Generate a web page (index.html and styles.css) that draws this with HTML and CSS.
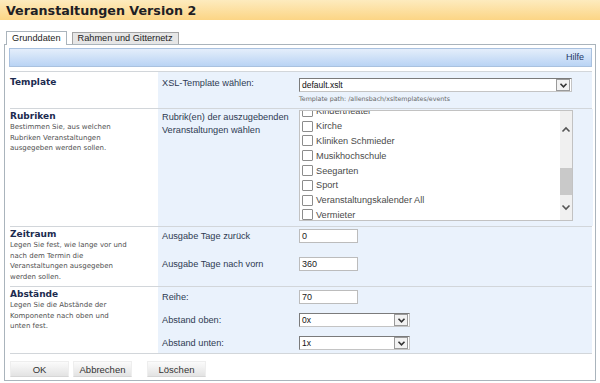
FILE: index.html
```html
<!DOCTYPE html>
<html lang="de">
<head>
    <meta charset="UTF-8">
    <title>Veranstaltungen Version 2</title>
    <link rel="stylesheet" href="styles.css">
</head>
<body>
    <div class="page-title">Veranstaltungen Version 2</div>

    <div class="tabs">
        <div class="tab tab-active">Grunddaten</div>
        <div class="tab">Rahmen und Gitternetz</div>
    </div>

    <div class="panel">
        <div class="help-bar">Hilfe</div>

        <div class="row row-first">
            <div class="row-info info-template">
                <div class="row-title">Template</div>
            </div>
            <div class="row-fields fields-template">
                <div class="field">
                    <div class="field-label label-template">XSL-Template wählen:</div>
                    <div class="field-control">
                        <div class="select select-wide">
                            <span class="select-value">default.xslt</span>
                            <span class="select-arrow"><svg width="9" height="7" viewBox="0 0 9 7"><path d="M1.5 1.8 L4.5 4.8 L7.5 1.8" fill="none" stroke="#333" stroke-width="1.6"/></svg></span>
                        </div>
                        <div class="path-hint">Template path: /allensbach/xsltemplates/events</div>
                    </div>
                </div>
            </div>
        </div>

        <div class="row">
            <div class="row-info">
                <div class="row-title">Rubriken</div>
                <div class="row-desc">Bestimmen Sie, aus welchen Rubriken Veranstaltungen ausgegeben werden sollen.</div>
            </div>
            <div class="row-fields fields-rubriken">
                <div class="field">
                    <div class="field-label label-multi">Rubrik(en) der auszugebenden Veranstaltungen wählen</div>
                    <div class="listbox">
                        <div class="list-view">
                            <ul class="check-list">
                                <li><span class="check"></span>Kindertheater</li>
                                <li><span class="check"></span>Kirche</li>
                                <li><span class="check"></span>Kliniken Schmieder</li>
                                <li><span class="check"></span>Musikhochschule</li>
                                <li><span class="check"></span>Seegarten</li>
                                <li><span class="check"></span>Sport</li>
                                <li><span class="check"></span>Veranstaltungskalender All</li>
                                <li><span class="check"></span>Vermieter</li>
                            </ul>
                        </div>
                        <div class="scrollbar">
                            <span class="scroll-arrow"><svg width="10" height="7" viewBox="0 0 10 7"><path d="M1.5 5.5 L5 2 L8.5 5.5" fill="none" stroke="#555" stroke-width="1.6"/></svg></span>
                            <span class="scroll-track"><span class="scroll-thumb"></span></span>
                            <span class="scroll-arrow"><svg width="10" height="7" viewBox="0 0 10 7"><path d="M1.5 1.5 L5 5 L8.5 1.5" fill="none" stroke="#555" stroke-width="1.6"/></svg></span>
                        </div>
                    </div>
                </div>
            </div>
        </div>

        <div class="row">
            <div class="row-info">
                <div class="row-title">Zeitraum</div>
                <div class="row-desc">Legen Sie fest, wie lange vor und nach dem Termin die Veranstaltungen ausgegeben werden sollen.</div>
            </div>
            <div class="row-fields fields-zeitraum">
                <div class="field">
                    <div class="field-label">Ausgabe Tage zurück</div>
                    <div class="input">0</div>
                </div>
                <div class="field">
                    <div class="field-label">Ausgabe Tage nach vorn</div>
                    <div class="input">360</div>
                </div>
            </div>
        </div>

        <div class="row">
            <div class="row-info">
                <div class="row-title">Abstände</div>
                <div class="row-desc">Legen Sie die Abstände der Komponente nach oben und unten fest.</div>
            </div>
            <div class="row-fields fields-abstaende">
                <div class="field">
                    <div class="field-label">Reihe:</div>
                    <div class="input">70</div>
                </div>
                <div class="field">
                    <div class="field-label">Abstand oben:</div>
                    <div class="select select-small">
                        <span class="select-value">0x</span>
                        <span class="select-arrow"><svg width="9" height="7" viewBox="0 0 9 7"><path d="M1.5 1.8 L4.5 4.8 L7.5 1.8" fill="none" stroke="#333" stroke-width="1.6"/></svg></span>
                    </div>
                </div>
                <div class="field">
                    <div class="field-label">Abstand unten:</div>
                    <div class="select select-small">
                        <span class="select-value">1x</span>
                        <span class="select-arrow"><svg width="9" height="7" viewBox="0 0 9 7"><path d="M1.5 1.8 L4.5 4.8 L7.5 1.8" fill="none" stroke="#333" stroke-width="1.6"/></svg></span>
                    </div>
                </div>
            </div>
        </div>

        <div class="buttons">
            <button class="btn">OK</button>
            <button class="btn">Abbrechen</button>
            <button class="btn btn-gap">Löschen</button>
        </div>
    </div>
</body>
</html>
```

FILE: styles.css
```css
:root {
    --title: #1c2b4f;
    --label: #2e3a52;
    --desc: #505050;
    --line: #d2d6da;
    --field-bg: #eaf2fc;
    --panel-border: #aab4bc;
}

* {
    margin: 0;
    padding: 0;
    box-sizing: border-box;
}

body {
    font-family: 'Liberation Sans', Arial, sans-serif;
    font-size: 9px;
    color: var(--label);
    background: #fff;
    width: 600px;
}

.page-title {
    height: 20px;
    padding: 3px 6px 0;
    font-family: 'DejaVu Sans', Verdana, sans-serif;
    font-size: 12.7px;
    font-weight: bold;
    color: #1e2024;
    background: linear-gradient(#fdebbe, #fcd585);
}

/* tabs */

.tabs {
    display: flex;
    align-items: flex-end;
    gap: 5px;
    margin-top: 10px;
    padding-left: 6px;
    height: 14px;
}

.tab {
    height: 12px;
    padding: 0 5px;
    line-height: 11px;
    font-size: 9.2px;
    color: #222;
    background: #e6e6e6;
    border: 1px solid #a4a4a4;
    border-bottom: none;
}

.tab-active {
    height: 14px;
    padding: 0 5px;
    line-height: 13px;
    background: #fff;
    border-color: var(--panel-border);
    position: relative;
    top: 1px;
}

/* panel */

.panel {
    margin: 0 4px;
    height: 337px;
    padding: 3px 3px 0 4px;
    border: 1px solid var(--panel-border);
}

.help-bar {
    height: 19px;
    padding-right: 7px;
    text-align: right;
    line-height: 17px;
    font-size: 9px;
    color: #1f3766;
    background: linear-gradient(#e4eefb, #b9d3f4);
    border: 1px solid #a9c1df;
}

.row {
    display: grid;
    grid-template-columns: 148px 1fr;
    margin-left: 1px;
    border-bottom: 1px solid var(--line);
}

.row-first {
    margin-top: 4px;
    border-top: 1px solid var(--line);
}

.row-info {
    padding: 2px 4px 4px 0;
}

.info-template {
    padding-top: 5px;
}

.row-title {
    font-family: 'DejaVu Sans', Verdana, sans-serif;
    font-size: 9px;
    font-weight: bold;
    line-height: 11px;
    color: var(--title);
}

.row-desc {
    max-width: 118px;
    font-family: 'DejaVu Sans', Verdana, sans-serif;
    font-size: 7px;
    line-height: 10.5px;
    color: var(--desc);
}

.row-fields {
    display: flex;
    flex-direction: column;
    padding: 0 20px 0 4px;
    background: var(--field-bg);
}

.fields-template {
    padding-top: 6px;
    padding-bottom: 5px;
}

.fields-rubriken {
    padding-top: 1px;
    padding-bottom: 5px;
}

.fields-zeitraum {
    gap: 14px;
    padding-top: 2px;
    padding-bottom: 10px;
}

.fields-abstaende {
    gap: 9px;
    padding-top: 3px;
    padding-bottom: 3px;
}

.field {
    display: grid;
    grid-template-columns: 137px 1fr;
    align-items: start;
}

.field-label {
    line-height: 14px;
    font-size: 9.2px;
    color: var(--label);
}

.label-template {
    line-height: 10px;
}

.label-multi {
    padding-top: 1px;
    line-height: 13px;
}

/* controls */

.select {
    display: flex;
    height: 14px;
    background: #fff;
    border: 1px solid #7b7b7b;
    border-right-color: #c4c4c4;
    border-bottom-color: #c4c4c4;
}

.select-wide {
    width: 273px;
}

.select-small {
    width: 111px;
}

.select-value {
    flex: 1;
    padding-left: 2px;
    line-height: 12px;
    font-size: 8.5px;
    color: #111;
}

.select-arrow {
    display: flex;
    align-items: center;
    justify-content: center;
    width: 14px;
    margin: 0 1px 0 0;
    background: #f2f2f2;
    border: 1px solid #9a9a9a;
}

.path-hint {
    margin-top: 3px;
    font-family: 'DejaVu Sans', Verdana, sans-serif;
    font-size: 6.3px;
    line-height: 8px;
    color: #666;
}

.input {
    width: 59px;
    height: 14px;
    padding-left: 2px;
    line-height: 12px;
    font-size: 9px;
    color: #222;
    background: #fff;
    border: 1px solid #bcbcbc;
}

.listbox {
    display: flex;
    width: 274px;
    height: 111px;
    background: #fff;
    border: 1px solid #c2c2c2;
}

.list-view {
    flex: 1;
    overflow: hidden;
}

.check-list {
    list-style: none;
    margin-top: -7px;
}

.check-list li {
    display: flex;
    align-items: center;
    gap: 3px;
    height: 14.8px;
    padding-left: 2px;
    font-size: 9.2px;
    color: #4a4a4a;
}

.check {
    width: 11px;
    height: 11px;
    border: 1px solid #8c8c8c;
    border-radius: 1px;
    background: #fff;
}

.scrollbar {
    display: flex;
    flex-direction: column;
    width: 12px;
    padding: 12px 0 7px;
    background: #f0f0f0;
}

.scroll-arrow {
    display: flex;
    align-items: center;
    justify-content: center;
    height: 12px;
}

.scroll-track {
    flex: 1;
    padding-top: 33px;
}

.scroll-thumb {
    display: block;
    height: 27px;
    background: #c9c9c9;
}

/* buttons */

.buttons {
    display: flex;
    gap: 4px;
    margin: 7px 0 0 1px;
}

.btn {
    width: 59px;
    height: 16px;
    font-family: 'Liberation Sans', Arial, sans-serif;
    font-size: 9.5px;
    color: #333;
    background: linear-gradient(#fbfbfb, #e3e3e3);
    border: 1px solid #eeeeee;
    border-bottom-color: #d6d6d6;
}

.btn-gap {
    margin-left: 11px;
}
```
